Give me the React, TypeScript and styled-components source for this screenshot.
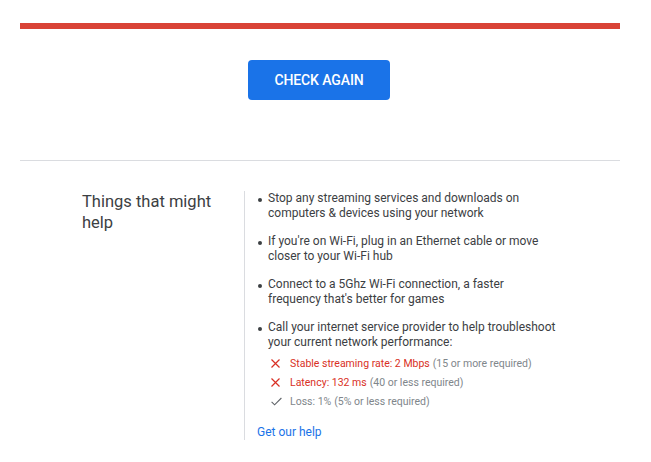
import React from "react";
import styled, { createGlobalStyle } from "styled-components";

const GlobalStyle = createGlobalStyle`
  body {
    margin: 0;
    background: #ffffff;
    font-family: Roboto, "Liberation Sans", Arial, sans-serif;
    color: #3c4043;
  }
`;

interface Check {
  ok: boolean;
  label: string;
  note: string;
}

const tips = [
  "Stop any streaming services and downloads on computers & devices using your network",
  "If you're on Wi-Fi, plug in an Ethernet cable or move closer to your Wi-Fi hub",
  "Connect to a 5Ghz Wi-Fi connection, a faster frequency that's better for games",
];

const checks: Check[] = [
  { ok: false, label: "Stable streaming rate: 2 Mbps", note: "(15 or more required)" },
  { ok: false, label: "Latency: 132 ms", note: "(40 or less required)" },
  { ok: true, label: "Loss: 1%", note: "(5% or less required)" },
];

const CrossIcon = () => (
  <svg width="9" height="9" viewBox="0 0 9 9">
    <path d="M0.5 0.5 L8.5 8.5 M8.5 0.5 L0.5 8.5" stroke="#d93025" strokeWidth="1.2" fill="none" />
  </svg>
);

const CheckIcon = () => (
  <svg width="11" height="9" viewBox="0 0 11 9">
    <path d="M0.6 4.8 L3.6 7.8 L10.4 1" stroke="#5f6368" strokeWidth="1.1" fill="none" />
  </svg>
);

const App: React.FC = () => {
  return (
    <Page>
      <GlobalStyle />
      <StatusBar />
      <ButtonRow>
        <CheckButton>CHECK AGAIN</CheckButton>
      </ButtonRow>
      <Divider />
      <HelpSection>
        <Heading>Things that might help</Heading>
        <TipColumn>
          <TipList>
            {tips.map((t) => (
              <Tip key={t}>{t}</Tip>
            ))}
            <Tip>
              Call your internet service provider to help troubleshoot your current network performance:
              <CheckList>
                {checks.map((c) => (
                  <CheckRow key={c.label}>
                    <IconBox>{c.ok ? <CheckIcon /> : <CrossIcon />}</IconBox>
                    <CheckLabel $ok={c.ok}>{c.label}</CheckLabel>
                    <Note>{c.note}</Note>
                  </CheckRow>
                ))}
              </CheckList>
            </Tip>
          </TipList>
          <HelpLink href="#">Get our help</HelpLink>
        </TipColumn>
      </HelpSection>
    </Page>
  );
};

export default App;

const Page = styled.div`
  width: 600px;
  margin-left: 20px;
  padding-top: 23px;
`;

const StatusBar = styled.div`
  height: 6px;
  background: #d94336;
`;

const ButtonRow = styled.div`
  display: flex;
  justify-content: center;
  margin-top: 31px;
  padding-right: 2px;
`;

const CheckButton = styled.button`
  width: 142px;
  height: 40px;
  border: none;
  border-radius: 4px;
  background: #1a73e8;
  color: #ffffff;
  font-family: Roboto, "Liberation Sans", Arial, sans-serif;
  font-size: 14px;
  font-weight: 500;
  letter-spacing: -0.1px;
  cursor: pointer;
`;

const Divider = styled.div`
  height: 1px;
  background: #dadce0;
  margin-top: 60px;
`;

const HelpSection = styled.div`
  display: flex;
  margin-top: 30px;
`;

const Heading = styled.h2`
  width: 162px;
  margin: 0 0 0 62px;
  font-size: 16.5px;
  font-weight: 400;
  line-height: 21px;
  color: #3c4043;
  box-sizing: border-box;
  padding-right: 20px;
`;

const TipColumn = styled.div`
  border-left: 1px solid #dadce0;
  padding-left: 12px;
  width: 300px;
`;

const TipList = styled.ul`
  list-style: none;
  margin: 0;
  padding: 0;
`;

const Tip = styled.li`
  position: relative;
  padding-left: 11px;
  font-size: 12px;
  line-height: 15px;
  color: #3c4043;
  margin-bottom: 13px;
  &::before {
    content: "";
    position: absolute;
    left: 1px;
    top: 7px;
    width: 4px;
    height: 4px;
    border-radius: 50%;
    background: #3c4043;
  }
`;

const CheckList = styled.div`
  margin-top: 4px;
  margin-left: 3px;
`;

const CheckRow = styled.div`
  display: flex;
  align-items: center;
  height: 19px;
  font-size: 10.5px;
`;

const IconBox = styled.span`
  display: inline-flex;
  width: 19px;
  align-items: center;
`;

const CheckLabel = styled.span<{ $ok: boolean }>`
  color: ${(p) => (p.$ok ? "#80868b" : "#d93025")};
  margin-right: 3px;
`;

const Note = styled.span`
  color: #80868b;
`;

const HelpLink = styled.a`
  display: block;
  margin-top: 14px;
  font-size: 12px;
  line-height: 15px;
  color: #1a73e8;
  text-decoration: none;
`;
